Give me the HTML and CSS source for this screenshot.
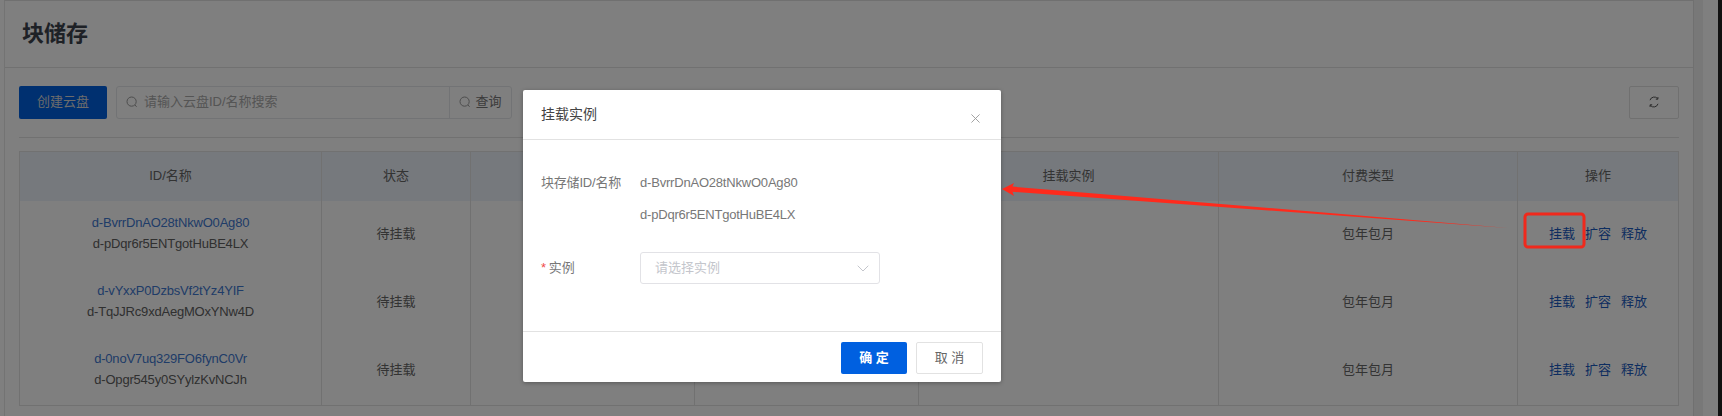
FILE: index.html
```html
<!DOCTYPE html>
<html lang="zh-CN">
<head>
    <meta charset="UTF-8">
    <title>块储存</title>
    <link rel="stylesheet" href="styles.css">
</head>
<body>

    <div class="app">
        <div class="page">
            <!-- Title -->
            <div class="page-head"><h1>块储存</h1></div>

            <!-- Toolbar -->
            <div class="toolbar">
                <button class="btn-primary">创建云盘</button>
                <div class="search">
                    <div class="search-input">
                        <svg class="icon-search" viewBox="0 0 12 12"><circle cx="5.6" cy="5.6" r="4.6"/><path d="M9 9l1.6 1.8"/></svg>
                        <span>请输入云盘ID/名称搜索</span>
                    </div>
                    <div class="search-btn">
                        <svg class="icon-search" viewBox="0 0 12 12"><circle cx="5.6" cy="5.6" r="4.6"/><path d="M9 9l1.6 1.8"/></svg>
                        <span>查询</span>
                    </div>
                </div>
                <button class="btn-refresh">
                    <svg viewBox="0 0 12 12"><path d="M2 4.2A4.4 4.4 0 0 1 9.6 2.6M10 7.8A4.4 4.4 0 0 1 2.4 9.4"/><path d="M9.9 1v2.2H7.8M2.1 11V8.8h2.1"/></svg>
                </button>
            </div>

            <!-- Table -->
            <div class="table">
                <div class="row row-head">
                    <div class="cell">ID/名称</div>
                    <div class="cell">状态</div>
                    <div class="cell"></div>
                    <div class="cell"></div>
                    <div class="cell">挂载实例</div>
                    <div class="cell">付费类型</div>
                    <div class="cell">操作</div>
                </div>
                <div class="row">
                    <div class="cell cell-id"><a>d-BvrrDnAO28tNkwO0Ag80</a><span>d-pDqr6r5ENTgotHuBE4LX</span></div>
                    <div class="cell">待挂载</div>
                    <div class="cell"></div>
                    <div class="cell"></div>
                    <div class="cell"></div>
                    <div class="cell">包年包月</div>
                    <div class="cell cell-ops"><a>挂载</a><a>扩容</a><a>释放</a></div>
                </div>
                <div class="row">
                    <div class="cell cell-id"><a>d-vYxxP0DzbsVf2tYz4YIF</a><span>d-TqJJRc9xdAegMOxYNw4D</span></div>
                    <div class="cell">待挂载</div>
                    <div class="cell"></div>
                    <div class="cell"></div>
                    <div class="cell"></div>
                    <div class="cell">包年包月</div>
                    <div class="cell cell-ops"><a>挂载</a><a>扩容</a><a>释放</a></div>
                </div>
                <div class="row">
                    <div class="cell cell-id"><a>d-0noV7uq329FO6fynC0Vr</a><span>d-Opgr545y0SYylzKvNCJh</span></div>
                    <div class="cell">待挂载</div>
                    <div class="cell"></div>
                    <div class="cell"></div>
                    <div class="cell"></div>
                    <div class="cell">包年包月</div>
                    <div class="cell cell-ops"><a>挂载</a><a>扩容</a><a>释放</a></div>
                </div>
            </div>
        </div>
        <div class="scroll-track"></div>
        <div class="scroll-gutter"></div>
        <div class="window-edge"></div>
    </div>

    <!-- Dialog -->
    <div class="mask"></div>
    <div class="dialog">
        <div class="dialog-head">
            <span>挂载实例</span>
            <svg class="dialog-close" viewBox="0 0 10 10"><path d="M.5.5l9 9M9.5.5l-9 9"/></svg>
        </div>
        <div class="dialog-body">
            <div class="form-row">
                <label>块存储ID/名称</label>
                <div class="form-values">
                    <div>d-BvrrDnAO28tNkwO0Ag80</div>
                    <div>d-pDqr6r5ENTgotHuBE4LX</div>
                </div>
            </div>
            <div class="form-row form-row-select">
                <label><i>*</i>实例</label>
                <div class="select">
                    <span>请选择实例</span>
                    <svg viewBox="0 0 12 7"><path d="M.7.7L6 6l5.3-5.3"/></svg>
                </div>
            </div>
        </div>
        <div class="dialog-foot">
            <button class="btn-ok">确 定</button>
            <button class="btn-cancel">取 消</button>
        </div>
    </div>

    <!-- Annotation drawn on the screenshot -->
    <svg class="mark" viewBox="0 0 1722 416">
        <path class="mark-arrow" d="M1002 189L1014 183L1012.5 186.6L1508 228L1012.5 191.8L1014 196Z"/>
        <rect class="mark-box" x="1525" y="214" width="59" height="33" rx="3"/>
    </svg>

</body>
</html>
```

FILE: styles.css
```css
* {
    box-sizing: border-box;
}

html, body {
    margin: 0;
    height: 416px;
    overflow: hidden;
}

body {
    font-family: "Liberation Sans", "Noto Sans CJK SC", sans-serif;
    font-size: 13px;
    color: #333;
    background: #fff;
}

/* Page */
.app {
    display: flex;
    height: 416px;
    padding-left: 4px;
    background: #fff;
}

.page {
    width: 1689px;
    border-left: 1px solid #e6e6e6;
    border-top: 1px solid #e0e0e0;
    background: #fff;
}

.scroll-track {
    width: 10px;
    background: #f0f0f0;
    border-left: 1px solid #e0e0e0;
}

.scroll-gutter {
    width: 15px;
    background: #fff;
}

.window-edge {
    width: 4px;
    background: #222;
}

.page-head {
    height: 67px;
    padding: 18px 0 0 17px;
    border-bottom: 1px solid #e3e3e3;
}

.page-head h1 {
    margin: 0;
    font-size: 22px;
    line-height: 30px;
    font-weight: bold;
    color: #3c434d;
}

/* Toolbar */
.toolbar {
    display: flex;
    align-items: center;
    height: 70px;
    margin: 0 14px;
    border-bottom: 1px solid #e3e3e3;
    padding-bottom: 1px;
}

.btn-primary {
    width: 88px;
    height: 33px;
    padding: 0 0 3px;
    border: none;
    border-radius: 2px;
    font: inherit;
    color: #d8d8d8;
    background: #0060e0;
}

.search {
    display: flex;
    width: 396px;
    height: 33px;
    margin-left: 9px;
    border: 1px solid #e4e6ea;
    border-radius: 3px;
    color: #aaa;
}

.search-input {
    display: flex;
    align-items: center;
    gap: 6px;
    width: 333px;
    padding-left: 9px;
    border-right: 1px solid #e4e6ea;
}

.search-btn {
    display: flex;
    align-items: center;
    justify-content: center;
    gap: 4px;
    flex: 1;
    color: #777;
}

.search span {
    padding-bottom: 3px;
}

.icon-search {
    width: 12px;
    height: 12px;
    fill: none;
    stroke: #999;
    stroke-width: 1;
}

.btn-refresh {
    display: flex;
    align-items: center;
    justify-content: center;
    width: 50px;
    height: 33px;
    margin-left: auto;
    padding: 0;
    background: #fff;
    border: 1px solid #e0e0e0;
    border-radius: 2px;
}

.btn-refresh svg {
    width: 12px;
    height: 12px;
    fill: none;
    stroke: #555;
    stroke-width: 1;
}

/* Table */
.table {
    margin: 13px 14px 0;
    border: 1px solid #e3e3e3;
}

.row {
    display: grid;
    grid-template-columns: 301px 149px 224px 224px 300px 299px 1fr;
    height: 68px;
}

.row-head {
    height: 49px;
    background: #ecf2fb;
}

.cell {
    display: flex;
    align-items: center;
    justify-content: center;
    padding-bottom: 5px;
    border-left: 1px solid #e3e3e3;
    color: #666;
}

.cell:first-child {
    border-left: none;
}

.cell-id {
    flex-direction: column;
    gap: 6px;
    line-height: 15px;
    letter-spacing: -.2px;
}

.cell-id a {
    color: #3f78d0;
}

.cell-id span {
    color: #606060;
}

.cell-ops {
    gap: 10px;
}

.cell-ops a {
    color: #1a5ac0;
}

/* Dialog */
.mask {
    position: absolute;
    inset: 0;
    background: rgba(0, 0, 0, .5);
}

.dialog {
    position: absolute;
    left: 523px;
    top: 90px;
    display: flex;
    flex-direction: column;
    width: 478px;
    height: 292px;
    border-radius: 2px;
    background: #fff;
    box-shadow: 0 1px 4px rgba(0, 0, 0, .3);
}

.dialog-head {
    display: flex;
    align-items: center;
    justify-content: space-between;
    height: 50px;
    padding: 0 21px 0 18px;
    border-bottom: 1px solid #e2e2e2;
    font-size: 14px;
    color: #444;
}

.dialog-head span {
    margin-bottom: 4px;
}

.dialog-close {
    width: 9px;
    height: 9px;
    margin-top: 7px;
    fill: none;
    stroke: #999;
    stroke-width: 1;
}

.dialog-body {
    flex: 1;
    padding: 33px 18px 0;
}

.form-row {
    display: flex;
    color: #777;
}

.form-row label {
    width: 99px;
    line-height: 20px;
    letter-spacing: -.2px;
}

.form-row i {
    margin-right: 3px;
    font-style: normal;
    color: #f04b4b;
}

.form-values {
    display: flex;
    flex-direction: column;
    gap: 12px;
    line-height: 20px;
    letter-spacing: -.2px;
}

.form-row-select {
    align-items: center;
    margin-top: 27px;
}

.select {
    display: flex;
    align-items: center;
    justify-content: space-between;
    width: 240px;
    height: 32px;
    padding: 0 10px 0 14px;
    border: 1px solid #e2e2e6;
    border-radius: 3px;
    color: #c4c6cc;
}

.select span {
    padding-bottom: 3px;
}

.select svg {
    width: 12px;
    height: 7px;
    fill: none;
    stroke: #c4c6cc;
    stroke-width: 1;
}

.dialog-foot {
    display: flex;
    justify-content: flex-end;
    gap: 9px;
    height: 51px;
    padding: 10px 18px 0 0;
    border-top: 1px solid #e2e2e2;
}

.btn-ok,
.btn-cancel {
    width: 66px;
    height: 32px;
    padding: 0 0 4px;
    border-radius: 2px;
    font: inherit;
}

.btn-ok {
    border: none;
    color: #fff;
    font-weight: bold;
    background: #0060e0;
}

.btn-cancel {
    width: 67px;
    border: 1px solid #e2e2e2;
    color: #666;
    background: #fff;
}

/* Annotation */
.mark {
    position: absolute;
    left: 0;
    top: 0;
    width: 1722px;
    height: 416px;
}

.mark-arrow {
    fill: #ff2a1c;
}

.mark-box {
    fill: none;
    stroke: #f0291c;
    stroke-width: 3;
}
```
